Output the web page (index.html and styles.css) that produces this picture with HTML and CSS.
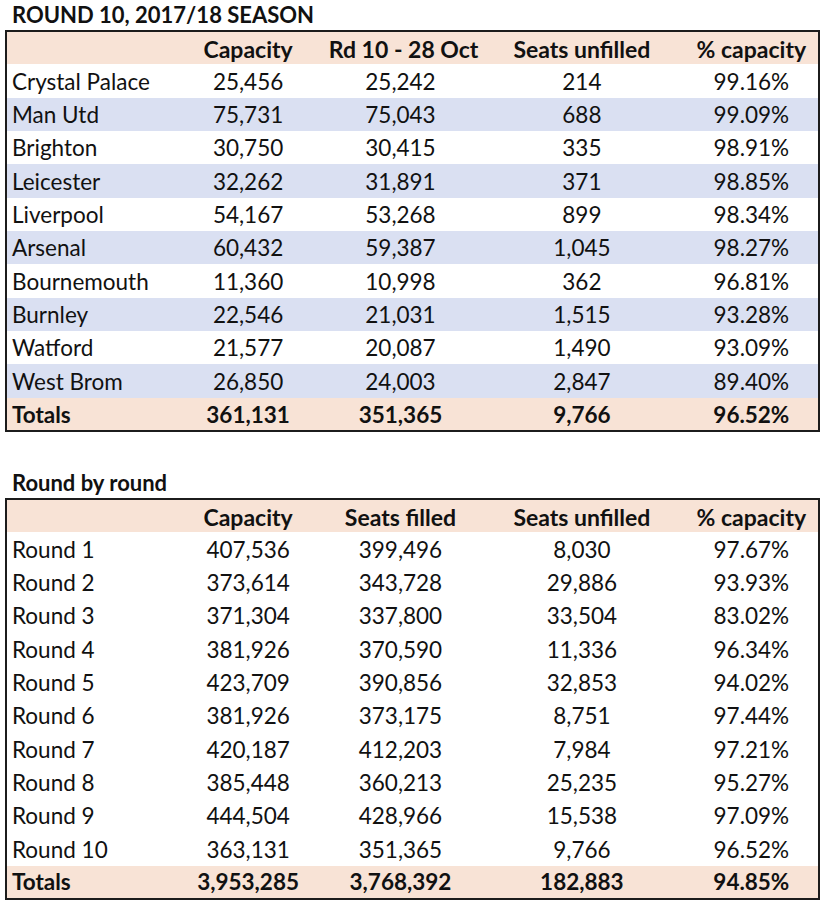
FILE: index.html
```html
<!DOCTYPE html>
<html>
<head>
<meta charset="utf-8">
<link rel="stylesheet" href="styles.css">
</head>
<body>
<div class="page">
  <h2 class="title t1">ROUND 10, 2017/18 SEASON</h2>
  <table class="stats banded">
    <colgroup><col class="c1"><col class="c2"><col class="c3"><col class="c4"><col class="c5"></colgroup>
    <tr class="head"><th></th><th>Capacity</th><th>Rd 10 - 28 Oct</th><th>Seats unfilled</th><th>% capacity</th></tr>
    <tr><td>Crystal Palace</td><td>25,456</td><td>25,242</td><td>214</td><td>99.16%</td></tr>
    <tr><td>Man Utd</td><td>75,731</td><td>75,043</td><td>688</td><td>99.09%</td></tr>
    <tr><td>Brighton</td><td>30,750</td><td>30,415</td><td>335</td><td>98.91%</td></tr>
    <tr><td>Leicester</td><td>32,262</td><td>31,891</td><td>371</td><td>98.85%</td></tr>
    <tr><td>Liverpool</td><td>54,167</td><td>53,268</td><td>899</td><td>98.34%</td></tr>
    <tr><td>Arsenal</td><td>60,432</td><td>59,387</td><td>1,045</td><td>98.27%</td></tr>
    <tr><td>Bournemouth</td><td>11,360</td><td>10,998</td><td>362</td><td>96.81%</td></tr>
    <tr><td>Burnley</td><td>22,546</td><td>21,031</td><td>1,515</td><td>93.28%</td></tr>
    <tr><td>Watford</td><td>21,577</td><td>20,087</td><td>1,490</td><td>93.09%</td></tr>
    <tr><td>West Brom</td><td>26,850</td><td>24,003</td><td>2,847</td><td>89.40%</td></tr>
    <tr class="total"><td>Totals</td><td>361,131</td><td>351,365</td><td>9,766</td><td>96.52%</td></tr>
  </table>

  <h2 class="title t2">Round by round</h2>
  <table class="stats">
    <colgroup><col class="c1"><col class="c2"><col class="c3"><col class="c4"><col class="c5"></colgroup>
    <tr class="head"><th></th><th>Capacity</th><th>Seats filled</th><th>Seats unfilled</th><th>% capacity</th></tr>
    <tr><td>Round 1</td><td>407,536</td><td>399,496</td><td>8,030</td><td>97.67%</td></tr>
    <tr><td>Round 2</td><td>373,614</td><td>343,728</td><td>29,886</td><td>93.93%</td></tr>
    <tr><td>Round 3</td><td>371,304</td><td>337,800</td><td>33,504</td><td>83.02%</td></tr>
    <tr><td>Round 4</td><td>381,926</td><td>370,590</td><td>11,336</td><td>96.34%</td></tr>
    <tr><td>Round 5</td><td>423,709</td><td>390,856</td><td>32,853</td><td>94.02%</td></tr>
    <tr><td>Round 6</td><td>381,926</td><td>373,175</td><td>8,751</td><td>97.44%</td></tr>
    <tr><td>Round 7</td><td>420,187</td><td>412,203</td><td>7,984</td><td>97.21%</td></tr>
    <tr><td>Round 8</td><td>385,448</td><td>360,213</td><td>25,235</td><td>95.27%</td></tr>
    <tr><td>Round 9</td><td>444,504</td><td>428,966</td><td>15,538</td><td>97.09%</td></tr>
    <tr><td>Round 10</td><td>363,131</td><td>351,365</td><td>9,766</td><td>96.52%</td></tr>
    <tr class="total"><td>Totals</td><td>3,953,285</td><td>3,768,392</td><td>182,883</td><td>94.85%</td></tr>
  </table>
</div>
</body>
</html>
```

FILE: styles.css
```css
html, body {
  margin: 0;
  padding: 0;
  background: #ffffff;
}
body {
  font-family: Lato, "Open Sans", "Liberation Sans", sans-serif;
  color: #111111;
}
.page {
  padding: 0 9px 0 5px;
}
.title {
  margin: 0;
  font-size: 22px;
  font-weight: 700;
  line-height: 30px;
  height: 30px;
  padding-left: 7px;
  color: #111111;
}
.t2 {
  margin-top: 35px;
  height: 31px;
  line-height: 32px;
}
.stats {
  border-collapse: collapse;
  table-layout: fixed;
  width: 815px;
  border: 2px solid #1c1c1c;
  font-size: 22.5px;
}
.c1 { width: 168px; }
.c2 { width: 154px; }
.c3 { width: 150px; }
.c4 { width: 212px; }
.c5 { width: 127px; }
.stats th, .stats td {
  box-sizing: border-box;
  height: 33.33px;
  padding: 2px 7px 0 0;
  text-align: center;
  vertical-align: middle;
  white-space: nowrap;
  line-height: 1;
}
.stats td:first-child, .stats th:first-child {
  text-align: left;
  padding-left: 5px;
}
.stats td:last-child, .stats th:last-child {
  padding-right: 7px;
}
.stats th {
  font-weight: 700;
  font-size: 23px;
}
.head {
  background: #f8e3d6;
}
.total {
  background: #f8e3d6;
  font-weight: 700;
}
.banded tr:nth-child(odd):not(.head):not(.total) {
  background: #dae0f2;
}
```
